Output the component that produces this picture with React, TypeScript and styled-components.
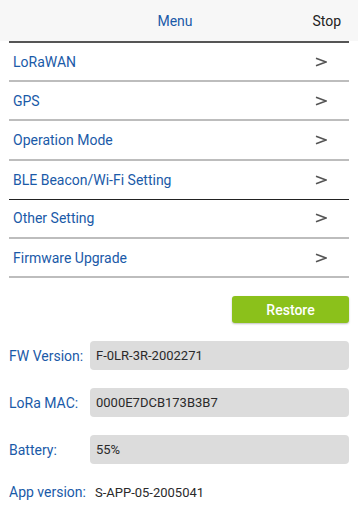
import React from "react";
import styled, { createGlobalStyle } from "styled-components";

const Global = createGlobalStyle`
  html, body { margin: 0; padding: 0; background: #ffffff; }
  body { font-family: Roboto, "Noto Sans", "Liberation Sans", sans-serif; -webkit-font-smoothing: antialiased; }
  * { box-sizing: border-box; }
`;

const Page = styled.div`
  width: 358px;
  height: 512px;
  background: #ffffff;
  display: flex;
  flex-direction: column;
`;

const Header = styled.header`
  height: 41px;
  background: #f7f7f7;
  display: grid;
  grid-template-columns: 1fr auto 1fr;
  align-items: center;
  padding: 0 17px 0 9px;
`;

const Title = styled.div`
  grid-column: 2;
  font-size: 14px;
  color: #1a5aa8;
  padding-top: 1px;
`;

const Stop = styled.div`
  grid-column: 3;
  justify-self: end;
  font-size: 14px;
  color: #222222;
  padding-top: 1px;
`;

const Menu = styled.nav`
  margin: 0 9px;
  border-top: 2px solid #555555;
  display: flex;
  flex-direction: column;
`;

const Row = styled.div<{ $dark?: boolean }>`
  height: ${(p) => (p.$dark ? "39.2px" : "39.2px")};
  display: flex;
  align-items: center;
  justify-content: space-between;
  padding: 0 22px 0 4px;
  border-bottom: ${(p) => (p.$dark ? "1.5px solid #222222" : "2px solid #bdbdbd")};
`;

const RowLabel = styled.span`
  font-size: 14px;
  color: #1a5aa8;
`;

const Chevron = styled.svg`
  width: 12px;
  height: 10px;
  display: block;
`;

const Actions = styled.div`
  display: flex;
  justify-content: flex-end;
  padding: 18px 9px 0 9px;
`;

const RestoreButton = styled.button`
  width: 117px;
  height: 27px;
  border: none;
  border-radius: 3px;
  background: #8bc11b;
  color: #ffffff;
  font-family: Roboto, "Noto Sans", sans-serif;
  font-size: 14px;
  font-weight: 500;
  box-shadow: 0 1px 2px rgba(0, 0, 0, 0.25);
  padding: 0;
`;

const Info = styled.div`
  display: flex;
  flex-direction: column;
  gap: 18px;
  padding: 18px 9px 0 9px;
`;

const Field = styled.div`
  display: grid;
  grid-template-columns: 81px 1fr;
  align-items: center;
`;

const FieldLabel = styled.span`
  font-size: 14px;
  color: #1a5aa8;
`;

const ValueBox = styled.div`
  height: 29px;
  border-radius: 4px;
  background: #dcdcdc;
  display: flex;
  align-items: center;
  padding: 0 6px;
  font-size: 13px;
  color: #2a2a2a;
`;

const AppLine = styled.div`
  display: flex;
  align-items: center;
  gap: 9px;
  padding: 20px 9px 0 9px;
`;

const AppValue = styled.span`
  font-size: 13px;
  color: #2a2a2a;
`;

const items = [
  { label: "LoRaWAN" },
  { label: "GPS" },
  { label: "Operation Mode" },
  { label: "BLE Beacon/Wi-Fi Setting", dark: true },
  { label: "Other Setting" },
  { label: "Firmware Upgrade" },
];

const fields = [
  { label: "FW Version:", value: "F-0LR-3R-2002271" },
  { label: "LoRa MAC:", value: "0000E7DCB173B3B7" },
  { label: "Battery:", value: "55%" },
];

export default function App() {
  return (
    <>
      <Global />
      <Page>
        <Header>
          <Title>Menu</Title>
          <Stop>Stop</Stop>
        </Header>
        <Menu>
          {items.map((it) => (
            <Row key={it.label} $dark={it.dark}>
              <RowLabel>{it.label}</RowLabel>
              <Chevron viewBox="0 0 12 10">
                <path d="M1 1.2 L11 5 L1 8.8" fill="none" stroke="#555555" strokeWidth="1.6" strokeLinejoin="miter" />
              </Chevron>
            </Row>
          ))}
        </Menu>
        <Actions>
          <RestoreButton>Restore</RestoreButton>
        </Actions>
        <Info>
          {fields.map((f) => (
            <Field key={f.label}>
              <FieldLabel>{f.label}</FieldLabel>
              <ValueBox>{f.value}</ValueBox>
            </Field>
          ))}
        </Info>
        <AppLine>
          <FieldLabel>App version:</FieldLabel>
          <AppValue>S-APP-05-2005041</AppValue>
        </AppLine>
      </Page>
    </>
  );
}
